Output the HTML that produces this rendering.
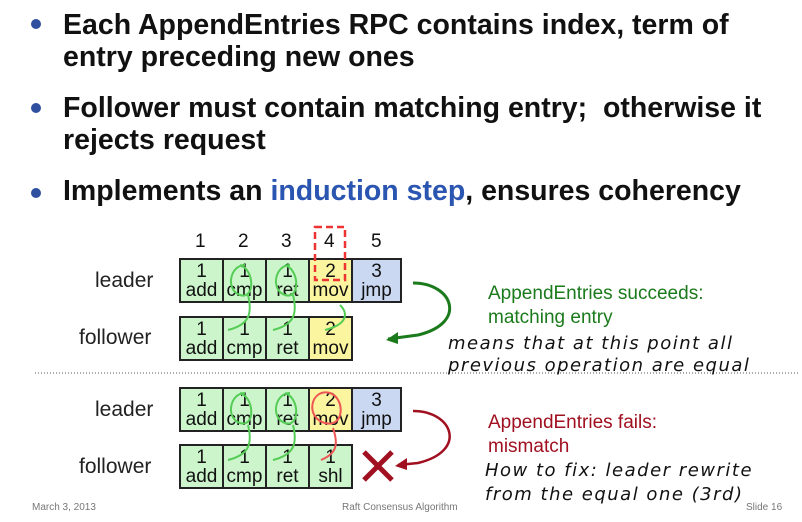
<!DOCTYPE html><html><head><style>
body{margin:0;width:802px;height:522px;background:#fff;font-family:"Liberation Sans",sans-serif;position:relative;overflow:hidden}
.b{position:absolute;left:63px;font-size:28.5px;font-weight:bold;color:#111;line-height:32px;white-space:nowrap}
.dot{position:absolute;left:31px;width:10px;height:10px;border-radius:50%;background:#2f4f9f}
.c{position:absolute;border:2px solid #222;box-sizing:border-box;text-align:center;font-size:19px;line-height:19px;padding-top:2px;color:#111}
.g{background:#ccf5cc}.y{background:#fbf5a0}.bl{background:#cad8f2}
.l{position:absolute;font-size:21px;color:#222}
.n{position:absolute;top:231px;font-size:19px;color:#111}
.s{position:absolute;font-size:19px;line-height:24px}
.h{position:absolute;font-family:"DejaVu Sans",sans-serif;font-style:italic;font-size:18px;color:#111;letter-spacing:1.5px;white-space:nowrap}
.f{position:absolute;top:502px;font-size:10px;color:#777}
</style></head><body>
<div class="dot" style="top:19px"></div><div class="b" style="top:9px">Each AppendEntries RPC contains index, term of<br>entry preceding new ones</div>
<div class="dot" style="top:103px"></div><div class="b" style="top:92px">Follower must contain matching entry;&nbsp; otherwise it<br>rejects request</div>
<div class="dot" style="top:188px"></div><div class="b" style="top:175px">Implements an <span style="color:#2a55b0">induction step</span>, ensures coherency</div>
<div class="n" style="left:195px">1</div><div class="n" style="left:238px">2</div><div class="n" style="left:281px">3</div><div class="n" style="left:324px">4</div><div class="n" style="left:371px">5</div>
<div class="l" style="left:95px;top:269px">leader</div><div class="l" style="left:79px;top:326px">follower</div>
<div class="l" style="left:95px;top:398px">leader</div><div class="l" style="left:79px;top:455px">follower</div>
<script>
function row(y,cells){var x=[179,222,265,308,351];cells.forEach(function(c,i){var d=document.createElement('div');d.className='c '+c[2];d.style.left=x[i]+'px';d.style.top=y+'px';d.style.width=(i==4?51:45)+'px';d.style.height='45px';d.innerHTML=c[0]+'<br>'+c[1];document.body.appendChild(d)})}
var L=[[1,'add','g'],[1,'cmp','g'],[1,'ret','g'],[2,'mov','y'],[3,'jmp','bl']];
row(258,L);row(316,[[1,'add','g'],[1,'cmp','g'],[1,'ret','g'],[2,'mov','y']]);
row(387,L);row(444,[[1,'add','g'],[1,'cmp','g'],[1,'ret','g'],[1,'shl','g']]);
</script>
<svg style="position:absolute;left:0;top:0" width="802" height="522">
<rect x="315" y="227" width="30" height="53" fill="none" stroke="#e33" stroke-width="2.5" stroke-dasharray="7,4"/>
<g fill="none" stroke="#5c5" stroke-width="2">
<path d="M245 265c-15 0-20 25-5 30s15-25 0-30 M248 295c5 20 0 30-20 35 M290 265c-15 0-20 25-5 30s15-25 0-30 M293 295c5 20 0 30-20 35 M340 305c10 10 5 20-15 25"/>
<path d="M245 393c-15 0-20 25-5 30s15-25 0-30 M248 425c5 20 0 30-20 35 M290 393c-15 0-20 25-5 30s15-25 0-30 M293 425c5 20 0 30-20 35"/>
</g>
<g fill="none" stroke="#e55" stroke-width="2"><path d="M330 393c-20-5-25 25-5 30s20-25 5-30 M333 428c5 15 5 25-12 32"/></g>
<path d="M413 283c40 0 55 40 5 52l-30 4" fill="none" stroke="#1b7a1b" stroke-width="3"/><path d="M386 340l12-8 0 12z" fill="#1b7a1b"/>
<path d="M413 411c40 0 55 40 5 52l-20 2" fill="none" stroke="#a01020" stroke-width="2.5"/><path d="M395 466l12-8 0 12z" fill="#a01020"/>
<path d="M364 452l28 28M392 452l-28 28" stroke="#a01020" stroke-width="5"/>
<line x1="35" y1="373" x2="800" y2="373" stroke="#555" stroke-dasharray="1,2"/>
</svg>
<div class="s" style="left:488px;top:282px;color:#1b7a1b">AppendEntries succeeds:<br>matching entry</div>
<div class="s" style="left:488px;top:411px;color:#a01020">AppendEntries fails:<br>mismatch</div>
<div class="h" style="left:448px;top:333px">means that at this point all</div>
<div class="h" style="left:448px;top:355px">previous operation are equal</div>
<div class="h" style="left:485px;top:460px">How to fix: leader rewrite</div>
<div class="h" style="left:485px;top:484px">from the equal one (3rd)</div>
<div class="f" style="left:32px">March 3, 2013</div>
<div class="f" style="left:342px">Raft Consensus Algorithm</div>
<div class="f" style="left:746px">Slide 16</div>
</body></html>
